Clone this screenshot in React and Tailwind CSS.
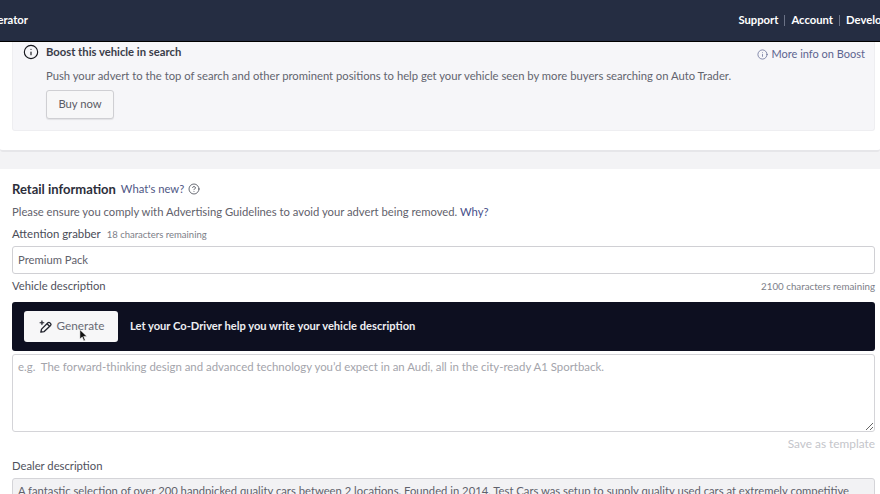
import { Info, CircleHelp } from 'lucide-react'

const font = { fontFamily: '"Lato", "Noto Sans", sans-serif' }

function Header() {
  return (
    <header className="relative z-10 flex h-[42px] shrink-0 items-center justify-between overflow-hidden border-b border-black bg-[#252d42] text-[11.25px] font-bold text-white">
      <span className="-ml-[18px] whitespace-nowrap">Operator</span>
      <nav className="-mr-[18px] flex items-center gap-[6px] whitespace-nowrap">
        <span>Support</span>
        <span className="h-[11px] w-px bg-[#6b7286]" />
        <span>Account</span>
        <span className="h-[11px] w-px bg-[#6b7286]" />
        <span>Developer</span>
      </nav>
    </header>
  )
}

function BoostCard() {
  return (
    <section className="rounded-b-[3px] border-b-2 border-[#e6e6e9] bg-white pb-[19px] pl-3 pr-[5px]">
      <div className="h-[89px] rounded-b-[3px] border border-t-0 border-[#eeeef1] bg-[#f6f6f9] pl-[10px] pr-[9px]">
        <div className="flex items-start justify-between pt-[2px]">
          <div className="flex items-center gap-[7px]">
            <Info className="h-[16px] w-[16px] text-[#15161c]" strokeWidth={1.7} />
            <h3 className="text-[11.25px] font-bold text-[#3a3d4a]">Boost this vehicle in search</h3>
          </div>
          <a className="mt-[2px] flex items-center gap-[3px] text-[11px] text-[#5d6590]">
            <Info className="h-[11px] w-[11px]" strokeWidth={1.6} />
            More info on Boost
          </a>
        </div>
        <p className="mt-[5px] pl-[23px] text-[11.25px] text-[#62646e]">
          Push your advert to the top of search and other prominent positions to help get your vehicle seen by more buyers searching on Auto Trader.
        </p>
        <button className="ml-[23px] mt-[5.5px] h-[29px] w-[68px] rounded-[3px] border border-[#cfcfd3] bg-[#f7f7f8] text-[11.25px] text-[#5a5c66] shadow-[0_1px_1px_rgba(0,0,0,0.08)]">
          Buy now
        </button>
      </div>
    </section>
  )
}

function GenerateBar() {
  return (
    <div className="flex h-[49px] items-center gap-[12px] rounded-[3px] bg-[#0d0f20] pl-[12px]">
      <button className="relative flex h-[31px] w-[94px] items-center justify-center gap-[4px] rounded-[3px] bg-[#f7f7f8] text-[11.75px] text-[#686a74]">
        {/* pencil with sparkles */}
        <svg viewBox="0 0 16 16" fill="none" stroke="#20222c" strokeWidth="1.4" strokeLinejoin="round" className="h-[15px] w-[15px]">
          <path d="M3 14 L3.8 10.8 L10.6 4 Q11.6 3 12.7 4.1 L13.4 4.8 Q14.4 5.9 13.4 6.9 L6.6 13.4 Z" />
          <path d="M9.6 5 L12.6 8" />
          <path d="M4.2 1.5 L4.8 3.4 L6.7 4 L4.8 4.6 L4.2 6.5 L3.6 4.6 L1.7 4 L3.6 3.4 Z" fill="#20222c" strokeWidth="0.5" />
        </svg>
        Generate
        {/* mouse pointer from the recording */}
        <svg viewBox="0 0 10 14" className="absolute left-[55px] top-[18px] h-[13px] w-[9px]">
          <path d="M1 0.5 L1 11 L3.6 8.6 L5.4 13 L7 12.3 L5.2 8 L8.8 8 Z" fill="#111" stroke="#fff" strokeWidth="0.6" />
        </svg>
      </button>
      <span className="text-[11.15px] font-bold text-[#eeeef2]">Let your Co-Driver help you write your vehicle description</span>
    </div>
  )
}

function RetailInfo() {
  return (
    <section className="mt-[17px] bg-white pl-3 pr-[5px] pt-[12px]">
      <div className="flex items-center gap-[5px]">
        <h2 className="text-[13px] font-bold leading-[16px] text-[#2c2e3a]">Retail information</h2>
        <a className="text-[11.25px] text-[#4f5785]">What's new?</a>
        <CircleHelp className="-ml-[1px] h-[12px] w-[12px] text-[#3a3d4a]" strokeWidth={1.5} />
      </div>
      <p className="mt-[7px] text-[11.25px] leading-[14px] text-[#5f616b]">
        Please ensure you comply with Advertising Guidelines to avoid your advert being removed. <a className="text-[#464f8a]">Why?</a>
      </p>
      <div className="mt-[8px] flex items-baseline gap-[6px]">
        <label className="text-[11.4px] leading-[14px] text-[#4a4c57]">Attention grabber</label>
        <span className="text-[9.5px] text-[#7c7e88]">18 characters remaining</span>
      </div>
      <div className="mt-[4px] flex h-[28px] items-center rounded-[3px] border border-[#d0d0d4] bg-white px-[5px] text-[11.25px] text-[#5f616b]">
        Premium Pack
      </div>
      <div className="mt-[5px] flex items-baseline justify-between">
        <label className="text-[11.25px] leading-[14px] text-[#4f515c]">Vehicle description</label>
        <span className="text-[9.75px] text-[#7c7e88]">2100 characters remaining</span>
      </div>
      <div className="mt-[8px]">
        <GenerateBar />
      </div>
      <textarea
        readOnly
        placeholder="e.g.  The forward-thinking design and advanced technology you’d expect in an Audi, all in the city-ready A1 Sportback."
        className="mt-[3px] block h-[78px] w-full rounded-[3px] border border-[#d4d4d8] bg-white px-[5px] py-[5px] text-[11.4px] leading-[14px] outline-none placeholder:text-[#a3a4ab]"
      />
      <div className="mt-[5px] text-right text-[11.85px] leading-[14px] text-[#c4c5ca]">Save as template</div>
      <label className="mt-[8px] block text-[11.25px] leading-[14px] text-[#4f515c]">Dealer description</label>
      <div className="mt-[5px] h-[40px] overflow-hidden rounded-[3px] border border-[#d4d4d8] bg-[#f2f2f4] px-[5px] pt-[5px] text-[11.25px] leading-[14px] text-[#5f616b]">
        A fantastic selection of over 200 handpicked quality cars between 2 locations. Founded in 2014, Test Cars was setup to supply quality used cars at extremely competitive
      </div>
    </section>
  )
}

export default function App() {
  return (
    <div className="flex h-[494px] w-[880px] flex-col overflow-hidden bg-[#f3f3f5]" style={font}>
      <Header />
      <main className="flex-1 overflow-hidden">
        <BoostCard />
        <RetailInfo />
      </main>
    </div>
  )
}
